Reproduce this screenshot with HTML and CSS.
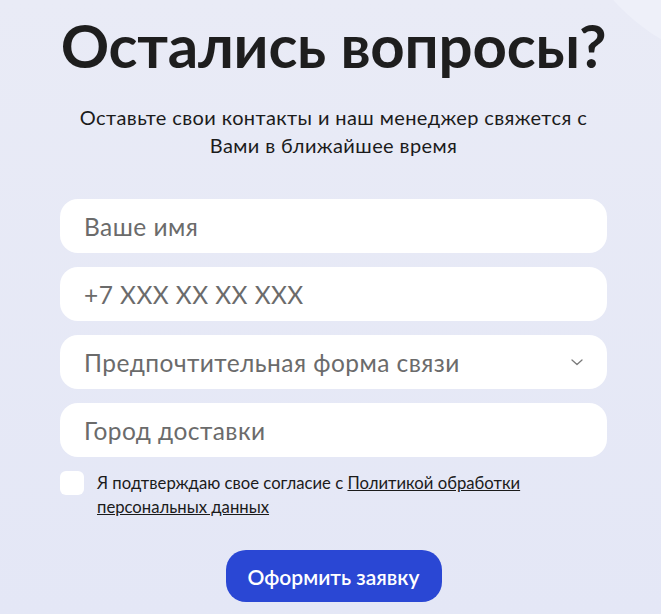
FILE: index.html
```html
<!DOCTYPE html>
<html lang="ru">
<head>
<meta charset="utf-8">
<title>Остались вопросы?</title>
<link rel="stylesheet" href="styles.css">
</head>
<body>
<div class="frame">
  <div class="bg-circle"></div>
  <main class="page">
    <h1 class="title">Остались вопросы?</h1>
    <p class="subtitle">Оставьте свои контакты и наш менеджер свяжется с<br>Вами в ближайшее время</p>
    <form class="form">
      <div class="field"><span class="placeholder">Ваше имя</span></div>
      <div class="field"><span class="placeholder">+7 XXX XX XX XXX</span></div>
      <div class="field field-select">
        <span class="placeholder">Предпочтительная форма связи</span>
        <svg class="chevron" width="12" height="7" viewBox="0 0 12 7"><path d="M1 1l5 4.5L11 1" fill="none" stroke="#7a7a7a" stroke-width="1.3" stroke-linecap="round" stroke-linejoin="round"/></svg>
      </div>
      <div class="field"><span class="placeholder">Город доставки</span></div>
      <div class="consent">
        <span class="checkbox"></span>
        <p class="consent-text">Я подтверждаю свое согласие с <a href="#">Политикой обработки персональных данных</a></p>
      </div>
      <div class="actions">
        <button type="button" class="submit">Оформить заявку</button>
      </div>
    </form>
  </main>
</div>
</body>
</html>
```
FILE: styles.css
```css
html, body {
  margin: 0;
  padding: 0;
  overflow: hidden;
}
body {
  font-family: "Lato", "Noto Sans", sans-serif;
  color: #1b1b1b;
}
.frame {
  position: relative;
  width: 661px;
  height: 614px;
  overflow: hidden;
  background: linear-gradient(180deg, #e9ebf6 0%, #e4e7f6 100%);
}
.bg-circle {
  position: absolute;
  left: 564px;
  top: -326px;
  width: 392px;
  height: 392px;
  border-radius: 50%;
  background: #eef0f9;
}
.page {
  position: relative;
  padding: 0 54px 0 60px;
}
.title {
  margin: 0;
  padding-top: 9px;
  font-size: 60px;
  line-height: 72px;
  font-weight: 700;
  letter-spacing: -0.2px;
  text-align: center;
  white-space: nowrap;
  color: #1e1e1e;
}
.subtitle {
  margin: 22px 0 0;
  font-size: 20px;
  line-height: 28px;
  letter-spacing: 0.4px;
  text-align: center;
  color: #1b1b1b;
}
.form {
  margin-top: 40px;
  display: flex;
  flex-direction: column;
  gap: 14px;
}
.field {
  height: 54px;
  background: #fff;
  border-radius: 18px;
  display: flex;
  align-items: center;
  padding: 0 24px;
}
.placeholder {
  font-size: 24.5px;
  letter-spacing: 0.45px;
  color: #6b6b6b;
}
.field-select {
  justify-content: space-between;
}
.chevron {
  display: block;
}
.consent {
  display: flex;
  align-items: flex-start;
  gap: 13px;
}
.checkbox {
  flex: none;
  width: 24px;
  height: 24px;
  border-radius: 6px;
  background: #fff;
}
.consent-text {
  margin: 0;
  font-size: 16.7px;
  line-height: 24px;
  color: #1b1b1b;
  max-width: 440px;
}
.consent-text a {
  color: #1b1b1b;
  text-decoration: underline;
}
.actions {
  display: flex;
  justify-content: center;
  margin-top: 17px;
}
.submit {
  width: 216px;
  height: 52px;
  border: 0;
  border-radius: 20px;
  background: #2a47d4;
  color: #fff;
  font-family: inherit;
  font-size: 21px;
  font-weight: 600;
}
```
